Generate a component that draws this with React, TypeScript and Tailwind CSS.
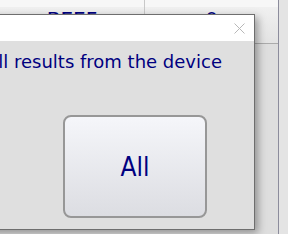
import React from "react";

export default function App() {
  return (
    <div className="relative w-[288px] h-[234px] overflow-hidden bg-[#e2e2e2] font-['DejaVu_Sans',sans-serif]">
      <div className="flex h-full">
        <div className="w-[278px] flex flex-col">
          <div className="h-[7px] flex bg-[#f7f7f7]">
            <div className="w-[145px] border-r border-[#c8c8c8]" />
            <div className="flex-1" />
          </div>
          <div className="h-[37px] flex bg-gradient-to-b from-[#f0f0f0] to-[#e3e3e3] border-b border-[#ababab]">
            <div className="w-[145px] border-r border-[#c8c8c8] flex justify-center items-start">
              <span className="text-[20px] leading-[24px] text-[#000080]">BEEF</span>
            </div>
            <div className="flex-1 flex justify-center items-start">
              <span className="text-[20px] leading-[24px] text-[#000080]">0</span>
            </div>
          </div>
          <div className="flex-1 bg-[#dedede]" />
        </div>
        <div className="w-px bg-[#8c8c9c]" />
        <div className="flex-1 bg-[#e4e4e4]" />
      </div>

      <div className="absolute left-[-200px] top-[14px] w-[455px] h-[216px] border border-[#6e6e6e] bg-[#dfdfdf] flex flex-col shadow-[3px_3px_8px_rgba(0,0,0,0.35)]">
        <div className="h-[26px] bg-white flex items-center justify-end pr-[9px]">
          <svg width="11" height="11" viewBox="0 0 11 11">
            <path d="M0.5 0.5 L10.5 10.5 M10.5 0.5 L0.5 10.5" stroke="#b8b8b8" strokeWidth="1" fill="none" />
          </svg>
        </div>
        <div className="flex justify-end pr-[32px] mt-[9px]">
          <span className="text-[18px] leading-[24px] text-[#000080] whitespace-nowrap">Read all results from the device</span>
        </div>
        <div className="flex justify-end pr-[47px] mt-[41px]">
          <button className="w-[144px] h-[103px] rounded-[8px] border-2 border-[#979797] bg-gradient-to-b from-[#f5f6fa] to-[#dcdde2] flex items-center justify-center">
            <span className="text-[26px] leading-[30px] text-[#000080] font-['DejaVu_Sans_Condensed','DejaVu_Sans',sans-serif] [font-stretch:condensed]">All</span>
          </button>
        </div>
      </div>
    </div>
  );
}
